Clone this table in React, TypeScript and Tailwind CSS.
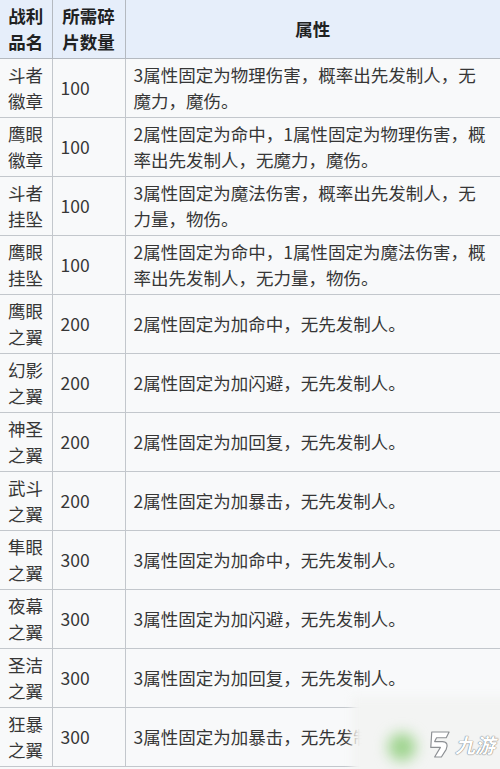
import React from "react";

type Row = { name: [string, string]; count: number; desc: string };

const rows: Row[] = [
  { name: ["斗者", "徽章"], count: 100, desc: "3属性固定为物理伤害，概率出先发制人，无魔力，魔伤。" },
  { name: ["鹰眼", "徽章"], count: 100, desc: "2属性固定为命中，1属性固定为物理伤害，概率出先发制人，无魔力，魔伤。" },
  { name: ["斗者", "挂坠"], count: 100, desc: "3属性固定为魔法伤害，概率出先发制人，无力量，物伤。" },
  { name: ["鹰眼", "挂坠"], count: 100, desc: "2属性固定为命中，1属性固定为魔法伤害，概率出先发制人，无力量，物伤。" },
  { name: ["鹰眼", "之翼"], count: 200, desc: "2属性固定为加命中，无先发制人。" },
  { name: ["幻影", "之翼"], count: 200, desc: "2属性固定为加闪避，无先发制人。" },
  { name: ["神圣", "之翼"], count: 200, desc: "2属性固定为加回复，无先发制人。" },
  { name: ["武斗", "之翼"], count: 200, desc: "2属性固定为加暴击，无先发制人。" },
  { name: ["隼眼", "之翼"], count: 300, desc: "3属性固定为加命中，无先发制人。" },
  { name: ["夜幕", "之翼"], count: 300, desc: "3属性固定为加闪避，无先发制人。" },
  { name: ["圣洁", "之翼"], count: 300, desc: "3属性固定为加回复，无先发制人。" },
  { name: ["狂暴", "之翼"], count: 300, desc: "3属性固定为加暴击，无先发制人。" },
];

export default function App() {
  return (
    <div className="relative w-[500px] h-[769px] overflow-hidden bg-[#f8f9fa] font-['Noto_Sans_CJK_SC','Noto_Sans',sans-serif] text-[17.5px] leading-[26px] text-[#363636]">
      <table className="w-[500px] border-collapse table-fixed">
        <colgroup>
          <col className="w-[52px]" />
          <col className="w-[73px]" />
          <col />
        </colgroup>
        <thead>
          <tr className="h-[58px] bg-[#e6eefa] text-[#202122] font-bold">
            <th className="border-r border-b border-[#b4b9c0] px-2 text-center align-middle">
              战利品名
            </th>
            <th className="border-r border-b border-[#b4b9c0] px-2 text-center align-middle">
              所需碎片数量
            </th>
            <th className="border-b border-[#b4b9c0] px-2 text-center align-middle">属性</th>
          </tr>
        </thead>
        <tbody>
          {rows.map((r, i) => (
            <tr key={i} className="h-[59px]">
              <td className="border-r border-b border-[#c3c7cc] px-2 align-middle">
                <div>{r.name[0]}</div>
                <div>{r.name[1]}</div>
              </td>
              <td className="border-r border-b border-[#c3c7cc] px-2 align-middle">{r.count}</td>
              <td className="border-b border-[#c3c7cc] px-2 align-middle">{r.desc}</td>
            </tr>
          ))}
        </tbody>
      </table>

      {/* watermark */}
      <div className="absolute left-[352px] top-[697px] w-[160px] h-[90px] bg-[#f3f4f3] blur-[4px]" />
      <div className="absolute left-[388px] top-[733px] w-[28px] h-[28px] rounded-full bg-[#9fd48f] blur-[7px]" />
      <div className="absolute left-[425px] top-[731px] flex items-center gap-[3px]">
        <svg width="27" height="27" viewBox="0 0 26 28">
          <path
            d="M6 1 L24 1 L21 7 L11 7 L9 11 L17 11 C22 11 23 15 21 19 L16 27 L9 27 L15 17 L5 17 Z"
            fill="#ffffff"
            stroke="#8c8f93"
            strokeWidth="1.2"
            strokeLinejoin="round"
          />
        </svg>
        <span className="italic font-bold text-[20px] leading-none text-white [text-shadow:0_0_1px_#6f7377,0_0_1px_#6f7377]">
          九游
        </span>
      </div>
    </div>
  );
}
